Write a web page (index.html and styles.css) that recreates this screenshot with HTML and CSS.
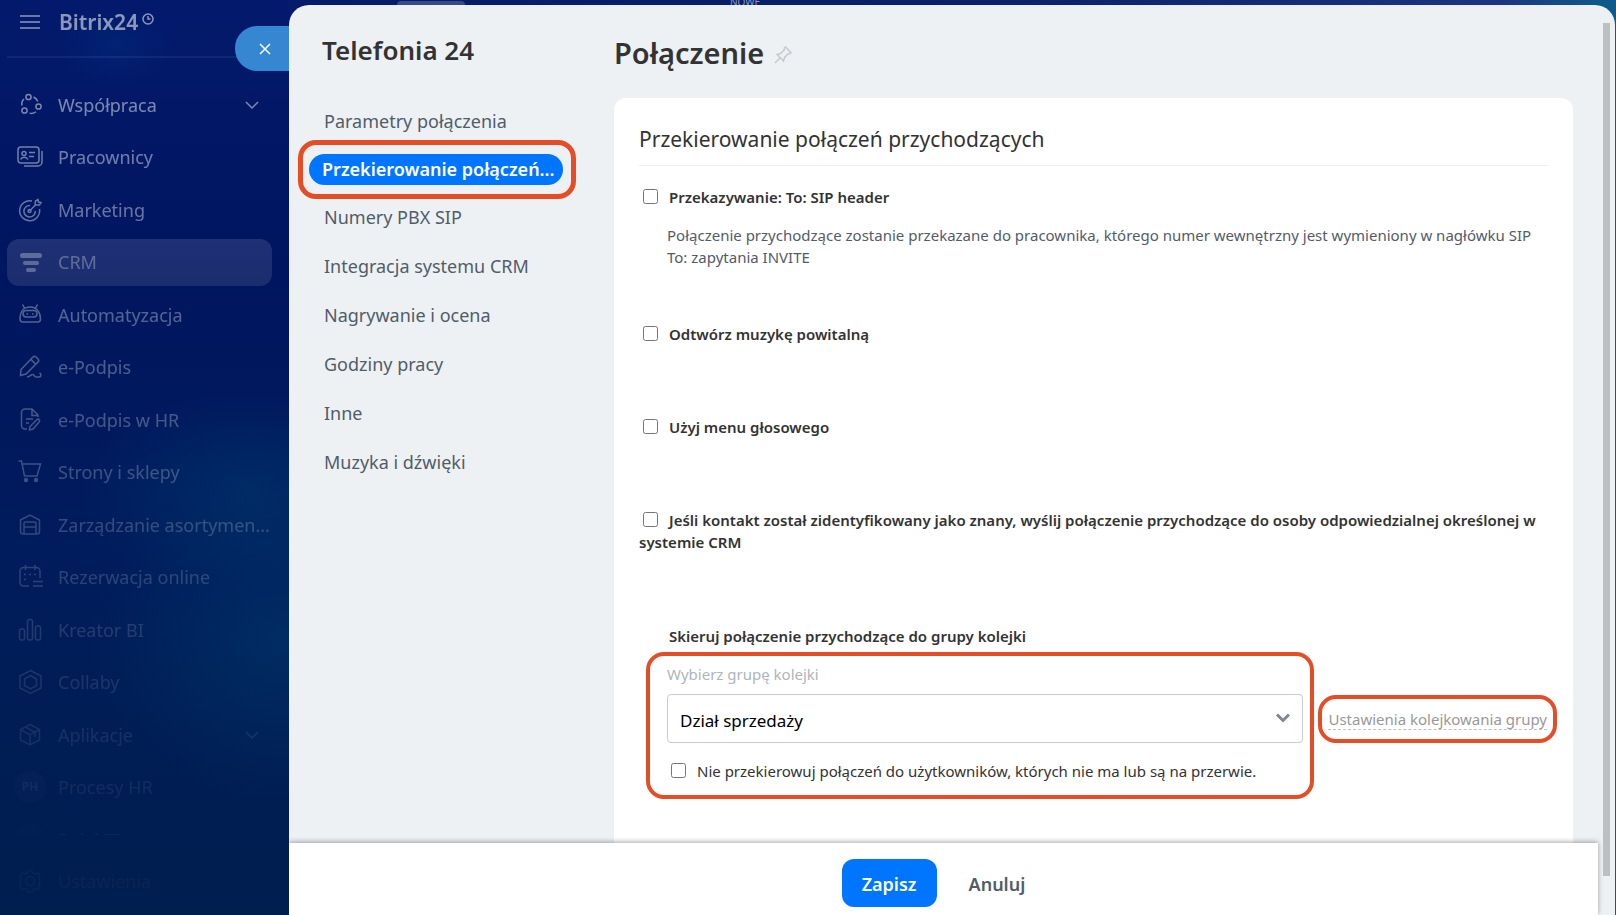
FILE: index.html
```
<!DOCTYPE html>
<html lang="pl">
<head>
  <meta charset="UTF-8" />
  <meta name="viewport" content="width=device-width, initial-scale=1.0" />
  <title>Telefonia 24</title>
  <link rel="stylesheet" href="styles.css">
</head>
<body>
  <aside class="sidebar">
    <div class="sidebar-fade">
      <div class="brand-row">
        <button class="menu-button" aria-label="Menu">
          <svg width="20" height="14" viewBox="0 0 20 14"><path d="M0 1h20M0 7h20M0 13h20"/></svg>
        </button>
        <a class="brand" href="#">Bitrix24</a>
        <svg class="brand-clock" width="12" height="12" viewBox="0 0 12 12"><circle cx="6" cy="6" r="5"/><path d="M6 3v3h2.5"/></svg>
      </div>
      <ul class="menu">
        <li><a href="#">
          <svg class="icon" viewBox="0 0 26 26"><circle cx="11.500" cy="5" r="2.600"/><circle cx="21.500" cy="14.500" r="2.600"/><circle cx="7.500" cy="18.500" r="2.600"/><path d="M16.500 5c2.200.9 3.600 2.400 4.300 4.600M19 19.800c-1.700 1.500-4 2-6.500 1.300M5 13.500c-.6-2.500.2-4.800 2-6.500"/></svg>
          Współpraca
          <svg class="chevron" width="14" height="8" viewBox="0 0 14 8"><path d="M1 1l6 6 6-6"/></svg>
        </a></li>
        <li><a href="#">
          <svg class="icon" viewBox="0 0 26 26"><rect x="1" y="3" width="21" height="16" rx="3"/><path d="M25 7v11a4 4 0 0 1-4 4H7M12 8.500h6M12 12.500h5M3.500 15.500c1.500-3 6-3 7.500 0"/><circle cx="7" cy="9.500" r="2"/></svg>
          Pracownicy
        </a></li>
        <li><a href="#">
          <svg class="icon" viewBox="0 0 26 26"><path d="M15 4a10 10 0 1 0 7.500 8M13 8.500a5.700 5.700 0 1 0 5.300 5.500M12.500 14l6-6M18 8l.5-4L21 2.500l.5 2.500 2.500.5L22.500 8z"/><circle cx="12.500" cy="14" r="1.500"/></svg>
          Marketing
        </a></li>
        <li class="active"><a href="#">
          <svg class="icon icon-solid" viewBox="0 0 26 26"><rect x="3" y="4" width="22" height="5" rx="2.500"/><rect x="6" y="12" width="16" height="4" rx="2"/><rect x="9" y="19" width="10" height="4" rx="2"/></svg>
          CRM
        </a></li>
        <li><a href="#">
          <svg class="icon" viewBox="0 0 26 26"><path d="M7.500 6L5.500 2.500M18.500 6l2-3.500M3 17c0-7 3.500-12 10-12s10.500 5 10.500 12c0 2-1 3-3 3H6c-2 0-3-1-3-3z"/><rect x="6" y="8.500" width="14" height="6.500" rx="3.200"/><path d="M9.500 12H11M15 12h1.500"/></svg>
          Automatyzacja
        </a></li>
        <li><a href="#">
          <svg class="icon" viewBox="0 0 26 26"><path d="M4 15.500L16 3c1-1 2-1 3 0l2 2c1 1 1 2 0 3L9 20l-5.500 1.500zM14 5.500l4.500 4.500M10 23c3 0 3.500-2.500 6-2.500 1.500 0 1 2.500 3 2.500h3c2.500 0 2.500-3 .5-4"/></svg>
          e-Podpis
        </a></li>
        <li><a href="#">
          <svg class="icon" viewBox="0 0 26 26"><path d="M10 22H8a3.500 3.500 0 0 1-3.500-3.500V5.500A3.500 3.500 0 0 1 8 2h7l6 6v2M15 2.500V8.500h5.500M9 12h7M9 16h3M12.500 23l.5-3.500 7-7c1.500-1.200 3.500.8 2.300 2.300L16 22z"/></svg>
          e-Podpis w HR
        </a></li>
        <li><a href="#">
          <svg class="icon" viewBox="0 0 26 26"><path d="M1.500 2h3L7.500 17H20L23.500 5H5"/><circle class="dot" cx="9" cy="21" r="2.200"/><circle class="dot" cx="19" cy="21" r="2.200"/></svg>
          Strony i sklepy
        </a></li>
        <li><a href="#">
          <svg class="icon" viewBox="0 0 26 26"><path d="M3.500 8L13 3l9.500 5v11.500c0 1.500-1 2.500-2.500 2.500H6c-1.500 0-2.500-1-2.500-2.500zM7 22V11.500c0-1 .5-1.500 1.500-1.500h9c1 0 1.500.5 1.500 1.500V22M7.500 15h11.500"/></svg>
          Zarządzanie asortymen...
        </a></li>
        <li><a href="#">
          <svg class="icon" viewBox="0 0 26 26"><path d="M12 22H6.500A3.500 3.500 0 0 1 3 18.500V7A3.500 3.500 0 0 1 6.500 3.500h13A3.500 3.500 0 0 1 23 7v7M8.500 1v5M18 1v5M7 10.500h2M12 10.500h2M17 10.500h2M7 15.500h2M16 17.500h10M16 22h10"/></svg>
          Rezerwacja online
        </a></li>
        <li><a href="#">
          <svg class="icon" viewBox="0 0 26 26"><rect x="2.500" y="12" width="5" height="11" rx="2"/><rect x="10.500" y="2.500" width="5" height="20.500" rx="2"/><rect x="18.500" y="9" width="5" height="14" rx="2"/></svg>
          Kreator BI
        </a></li>
        <li><a href="#">
          <svg class="icon" viewBox="0 0 26 26"><path d="M13.500 1.500L24 7v12l-10.500 5.500L3 19V7zM13.500 6.500l6 3.500v6.500l-6 3.500-6-3.500V10z"/></svg>
          Collaby
        </a></li>
        <li><a href="#">
          <svg class="icon" viewBox="0 0 26 26"><path d="M13 2.500L22.500 7.500v10.500L13 23l-9.500-5V7.500zM3.500 7.500L13 13l9.500-5.500M13 13v10M8.500 5l9.500 5.500V15"/></svg>
          Aplikacje
          <svg class="chevron" width="14" height="8" viewBox="0 0 14 8"><path d="M1 1l6 6 6-6"/></svg>
        </a></li>
        <li><a href="#"><span class="avatar">PH</span>Procesy HR</a></li>
      </ul>
      <div class="menu-cut"><a href="#"><span class="avatar"></span>Dział IT</a></div>
      <div class="menu-bottom"><a href="#">
        <svg class="icon" viewBox="0 0 26 26"><path d="M11 2.500h4l.8 2.700 2.400 1 2.500-1.300 2.500 2.800-1.300 2.500 1 2.300v1.500l-1 2.500 1.300 2.500-2.500 2.700-2.700-1.200-2.300 1-.7 2.500h-4l-.8-2.500-2.400-1-2.500 1.200-2.500-2.700 1.300-2.500-1-2.500v-1.500l1-2.300-1.300-2.500 2.500-2.800 2.600 1.300 2.300-1z"/><circle cx="13" cy="13" r="4.500"/></svg>
        Ustawienia
      </a></div>
    </div>
    <button class="close-tab" aria-label="Zamknij">
      <svg width="12" height="12" viewBox="0 0 12 12"><path d="M1 1l10 10M11 1L1 11"/></svg>
    </button>
  </aside>

  <div class="workspace">
    <div class="top-strip">
      <span class="strip-pill"></span>
      <span class="strip-label">NOWE</span>
    </div>
    <div class="slider">
      <div class="slider-main">
        <div class="slider-body">
          <nav class="settings-nav">
            <h2>Telefonia 24</h2>
            <ul>
              <li><a href="#">Parametry połączenia</a></li>
              <li class="current"><a href="#">Przekierowanie połączeń...</a></li>
              <li><a href="#">Numery PBX SIP</a></li>
              <li><a href="#">Integracja systemu CRM</a></li>
              <li><a href="#">Nagrywanie i ocena</a></li>
              <li><a href="#">Godziny pracy</a></li>
              <li><a href="#">Inne</a></li>
              <li><a href="#">Muzyka i dźwięki</a></li>
            </ul>
          </nav>
          <main class="content">
            <div class="page-title">
              <h1>Połączenie</h1>
              <svg width="18" height="18" viewBox="0 0 18 18"><path d="M1 17l5-5M3 8.500l6.500 6.500 1-3.500 4-4 1.500.2L17 6.500 11.500 1l-1.200 1 .2 1.500-4 4z"/></svg>
            </div>
            <form class="card" id="settings">
              <h3>Przekierowanie połączeń przychodzących</h3>
              <label class="option first"><input type="checkbox">Przekazywanie: To: SIP header</label>
              <p class="hint">Połączenie przychodzące zostanie przekazane do pracownika, którego numer wewnętrzny jest wymieniony w nagłówku SIP To: zapytania INVITE</p>
              <label class="option after-hint"><input type="checkbox">Odtwórz muzykę powitalną</label>
              <label class="option"><input type="checkbox">Użyj menu głosowego</label>
              <label class="option"><input type="checkbox">Jeśli kontakt został zidentyfikowany jako znany, wyślij połączenie przychodzące do osoby odpowiedzialnej określonej w systemie CRM</label>
              <h4>Skieruj połączenie przychodzące do grupy kolejki</h4>
              <div class="queue-row">
                <div class="queue-box">
                  <label class="queue-label" for="queue">Wybierz grupę kolejki</label>
                  <div class="select-wrap">
                    <select id="queue">
                      <option>Dział sprzedaży</option>
                    </select>
                    <svg width="16" height="10" viewBox="0 0 16 10"><path d="M2 1.500l6 6 6-6"/></svg>
                  </div>
                  <label class="skip-option"><input type="checkbox">Nie przekierowuj połączeń do użytkowników, których nie ma lub są na przerwie.</label>
                </div>
                <div class="queue-link"><a href="#">Ustawienia kolejkowania grupy</a></div>
              </div>
            </form>
          </main>
        </div>
        <footer class="buttons">
          <button class="save" type="submit" form="settings">Zapisz</button>
          <button class="cancel" type="button">Anuluj</button>
        </footer>
      </div>
      <div class="scroll-track"><div class="scroll-thumb"></div></div>
    </div>
  </div>
</body>
</html>
```
FILE: styles.css
```
* {
  box-sizing: border-box;
}
body {
  margin: 0;
  height: 100vh;
  display: flex;
  overflow: hidden;
  font-family: 'Segoe UI', 'Noto Sans', 'Open Sans', sans-serif;
  color: #333;
  background: linear-gradient(90deg, #031a6c 0%, #0a2068 60%, #1b3580 93%, #0e5a88 99%);
}
ul {
  list-style: none;
  margin: 0;
  padding: 0;
}
h1, h2, h3, h4, p {
  margin: 0;
}
a {
  text-decoration: none;
}
button, select {
  font-family: inherit;
}
svg {
  fill: none;
  flex: none;
}

/* left menu */
.sidebar {
  position: relative;
  width: 289px;
  flex: none;
  background:
    radial-gradient(ellipse 60px 40px at 115px 45px, rgba(0, 50, 130, 0.35), transparent),
    radial-gradient(ellipse 170px 100px at 250px 490px, rgba(0, 64, 112, 0.45), transparent),
    radial-gradient(ellipse 200px 160px at 289px 640px, rgba(0, 64, 112, 0.45), transparent),
    linear-gradient(#031a6c, #00155f 30%, #001c5c 60%, #001e4e);
}
.sidebar-fade {
  height: 100%;
  display: flex;
  flex-direction: column;
  -webkit-mask-image: linear-gradient(rgba(0, 0, 0, 0.56), rgba(0, 0, 0, 0.36) 30%, rgba(0, 0, 0, 0.13) 70%, rgba(0, 0, 0, 0.03) 95%);
  mask-image: linear-gradient(rgba(0, 0, 0, 0.56), rgba(0, 0, 0, 0.36) 30%, rgba(0, 0, 0, 0.13) 70%, rgba(0, 0, 0, 0.03) 95%);
}
.sidebar svg {
  stroke: #fff;
  stroke-width: 1.500;
}
.brand-row {
  display: flex;
  align-items: center;
  height: 58px;
  margin: 0 7px 23px;
  padding: 0 13px 13px;
  border-bottom: 2px solid rgba(255, 255, 255, 0.12);
}
.menu-button {
  display: flex;
  padding: 0;
  margin-right: 19px;
  border: none;
  background: none;
}
.brand {
  color: #fff;
  font-size: 21px;
  font-weight: 600;
}
.brand-clock {
  margin: 0 0 6px 4px;
}
.menu {
  flex: 1;
  display: flex;
  flex-direction: column;
  justify-content: space-between;
}
.menu li, .menu-cut, .menu-bottom {
  margin: 0 17px 0 7px;
}
.menu a, .menu-cut a, .menu-bottom a {
  display: flex;
  align-items: center;
  height: 47px;
  padding-left: 10px;
  border-radius: 12px;
  color: #fff;
  font-size: 18px;
  white-space: nowrap;
}
.menu .active a {
  background: rgba(255, 255, 255, 0.3);
}
.icon {
  width: 26px;
  height: 26px;
  margin-right: 15px;
}
.sidebar .icon-solid, .sidebar .dot {
  fill: #fff;
  stroke: none;
}
.chevron {
  margin: 0 13px 0 auto;
}
.avatar {
  width: 32px;
  height: 32px;
  margin: 0 12px 0 -3px;
  border-radius: 50%;
  background: rgba(255, 255, 255, 0.2);
  font-size: 12px;
  font-weight: 600;
  line-height: 32px;
  text-align: center;
}
.menu-cut {
  height: 24px;
  padding-top: 5px;
  overflow: hidden;
}
.menu-bottom {
  padding: 22px 0 11px;
}
.close-tab {
  position: absolute;
  top: 26px;
  right: 0;
  width: 54px;
  height: 45px;
  display: flex;
  align-items: center;
  padding: 0 0 0 24px;
  border: none;
  border-radius: 22px 0 0 22px;
  background: #3487d0;
}

/* slide-over */
.workspace {
  flex: 1;
  min-width: 0;
  display: flex;
  flex-direction: column;
}
.top-strip {
  display: flex;
  align-items: flex-end;
  height: 5px;
  flex: none;
}
.strip-pill {
  width: 68px;
  height: 4px;
  margin-left: 108px;
  border-radius: 8px 8px 0 0;
  background: rgba(255, 255, 255, 0.2);
}
.strip-label {
  margin-left: 265px;
  color: #8f9bc4;
  font-size: 10px;
  line-height: 6px;
}
.slider {
  flex: 1;
  min-height: 0;
  display: flex;
  margin-right: 1px;
  border-radius: 20px 20px 0 0;
  background: #edf1f4;
  overflow: hidden;
}
.slider-main {
  flex: 1;
  min-width: 0;
  display: flex;
  flex-direction: column;
}
.slider-body {
  flex: 1;
  min-height: 0;
  display: flex;
  overflow: hidden;
}
.scroll-track {
  width: 17px;
  padding: 18px 5px 39px;
}
.scroll-thumb {
  height: 100%;
  background: #bcc0c0;
}

.settings-nav {
  width: 325px;
  flex: none;
  padding: 27px 38px 0 9px;
}
.settings-nav h2 {
  margin-bottom: 29px;
  padding-left: 24px;
  font-size: 26px;
  font-weight: 600;
  line-height: 36px;
}
.settings-nav li a {
  display: block;
  padding-left: 26px;
  color: #525c69;
  font-size: 18px;
  line-height: 49px;
  white-space: nowrap;
}
.settings-nav .current {
  margin: -6px 0;
  padding: 9px 8px 9px 6px;
  border: 5px solid #e44d25;
  border-radius: 18px;
}
.settings-nav .current a {
  padding-left: 13px;
  border-radius: 16px;
  background: #0075ff;
  color: #fff;
  font-weight: 600;
  line-height: 31px;
}

.content {
  flex: 1;
  min-width: 0;
  padding: 26px 25px 0 0;
  display: flex;
  flex-direction: column;
}
.page-title {
  display: flex;
  align-items: center;
  gap: 10px;
  margin-bottom: 23px;
}
.page-title h1 {
  font-size: 29px;
  font-weight: 600;
  line-height: 44px;
}
.page-title svg {
  margin-top: 4px;
  stroke: #c5cace;
  stroke-width: 1.500;
}
.card {
  flex: 1;
  padding: 27px 25px 0;
  border-radius: 12px 12px 0 0;
  background: #fff;
  font-size: 15px;
  line-height: 22px;
}
.card h3 {
  padding-bottom: 12px;
  border-bottom: 1px solid #edeef0;
  font-size: 21px;
  font-weight: 400;
  line-height: 28px;
}
.card input {
  width: 15px;
  height: 15px;
  margin: 0 11px 0 4px;
  vertical-align: -1px;
}
.option {
  display: block;
  margin-top: 71px;
  font-weight: 600;
}
.option.first {
  margin-top: 20px;
}
.option.after-hint {
  margin-top: 55px;
}
.hint {
  margin-top: 16px;
  padding-left: 28px;
  color: #525c69;
}
.card h4 {
  margin-top: 72px;
  padding-left: 30px;
  font-size: 15px;
  font-weight: 600;
}
.queue-row {
  display: flex;
  align-items: flex-start;
  gap: 4px;
  margin: 5px -9px 0 7px;
}
.queue-box {
  flex: 1;
  padding: 7px 7px 13px 17px;
  border: 4px solid #e44d25;
  border-radius: 18px;
}
.queue-label {
  display: block;
  margin-bottom: 9px;
  color: #b0b5ba;
}
.select-wrap {
  position: relative;
  margin-bottom: 17px;
}
.select-wrap select {
  display: block;
  width: 100%;
  height: 49px;
  padding: 3px 12px 0;
  appearance: none;
  border: 1px solid #c6cdd3;
  border-radius: 4px;
  background: #fff;
  color: #000;
  font-size: 17px;
}
.select-wrap svg {
  position: absolute;
  top: 19px;
  right: 12px;
  stroke: #7f8790;
  stroke-width: 3;
  pointer-events: none;
}
.skip-option {
  display: block;
}
.queue-link {
  margin-top: 43px;
  padding: 9px 6px;
  border: 4px solid #e44d25;
  border-radius: 18px;
  white-space: nowrap;
}
.queue-link a {
  border-bottom: 1px dashed #c0c0c0;
  color: #999;
}

.buttons {
  position: relative;
  display: flex;
  justify-content: center;
  align-items: center;
  height: 72px;
  flex: none;
  padding-top: 8px;
  background: #fff;
  box-shadow: 0 -1px 5px rgba(0, 0, 0, 0.35);
}
.buttons button {
  height: 48px;
  padding: 2px 20px 0;
  border: none;
  border-radius: 12px;
  font-size: 18px;
  font-weight: 600;
}
.buttons .save {
  margin-right: 12px;
  background: #0075ff;
  color: #fff;
}
.buttons .cancel {
  background: none;
  color: #525c69;
}
```
